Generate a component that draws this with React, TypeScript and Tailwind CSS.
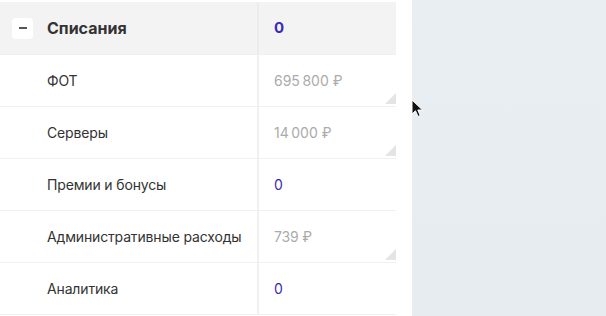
import React from 'react';

type Row = { label: string; value: string; muted: boolean; handle: boolean };

// narrow no-break space for thousands, as ru-RU number formatting gives
const rows: Row[] = [
  { label: 'ФОТ', value: '695\u202F800 ₽', muted: true, handle: true },
  { label: 'Серверы', value: '14\u202F000 ₽', muted: true, handle: true },
  { label: 'Премии и бонусы', value: '0', muted: false, handle: false },
  { label: 'Административные расходы', value: '739 ₽', muted: true, handle: true },
  { label: 'Аналитика', value: '0', muted: false, handle: false },
];

const ResizeHandle = () => (
  <svg className="absolute bottom-[2px] right-0" width="11" height="11" viewBox="0 0 11 11">
    <path d="M11 0 L11 11 L0 11 Z" fill="#e4e4e4" />
  </svg>
);

const Cursor = () => (
  <svg className="absolute left-[411px] top-[99px]" width="14" height="20" viewBox="0 0 14 20">
    <path d="M1 1 L1 15 L4.5 11.8 L7 17.5 L9.2 16.5 L6.8 11 L11.5 11 Z" fill="#111" stroke="#fff" strokeWidth="1" strokeLinejoin="round" />
  </svg>
);

export default function App() {
  return (
    <div
      className="relative flex h-[316px] w-[606px] overflow-hidden bg-white"
      style={{ fontFamily: 'Inter, "Noto Sans", sans-serif' }}
    >
      <div className="w-[412px] shrink-0 bg-white pt-[2px] pr-[16px]">
        {/* section header */}
        <div className="flex h-[53px] border-b border-[#f0f0f0] bg-[#f3f3f3]">
          <div className="flex w-[257px] items-center pl-[12px]">
            <button className="flex h-[21px] w-[21px] items-center justify-center rounded-[4px] bg-white">
              <span className="block h-[2px] w-[8px] bg-[#555]" />
            </button>
            <span className="ml-[14px] text-[16px] font-bold text-[#333]">Списания</span>
          </div>
          <div className="flex flex-1 items-center border-l-2 border-[#ececec] pl-[15px] text-[15px] font-bold text-[#3a2bb5]">
            0
          </div>
        </div>
        {rows.map((r) => (
          <div key={r.label} className="flex h-[52px] border-b border-[#f0f0f0]">
            <div className="flex w-[257px] items-center pl-[47px] text-[14px] tracking-[-0.15px] text-[#333]">
              {r.label}
            </div>
            <div
              className={
                'relative flex flex-1 items-center border-l-2 border-[#f0f0f0] pl-[15px] text-[14px] tracking-[-0.2px] ' +
                (r.muted ? 'text-[#ababab]' : 'text-[#3a2bb5]')
              }
            >
              {r.value}
              {r.handle && <ResizeHandle />}
            </div>
          </div>
        ))}
      </div>
      <div className="flex-1 bg-gradient-to-b from-[#e9eef2] to-[#e6ecf0]" />
      <Cursor />
    </div>
  );
}
